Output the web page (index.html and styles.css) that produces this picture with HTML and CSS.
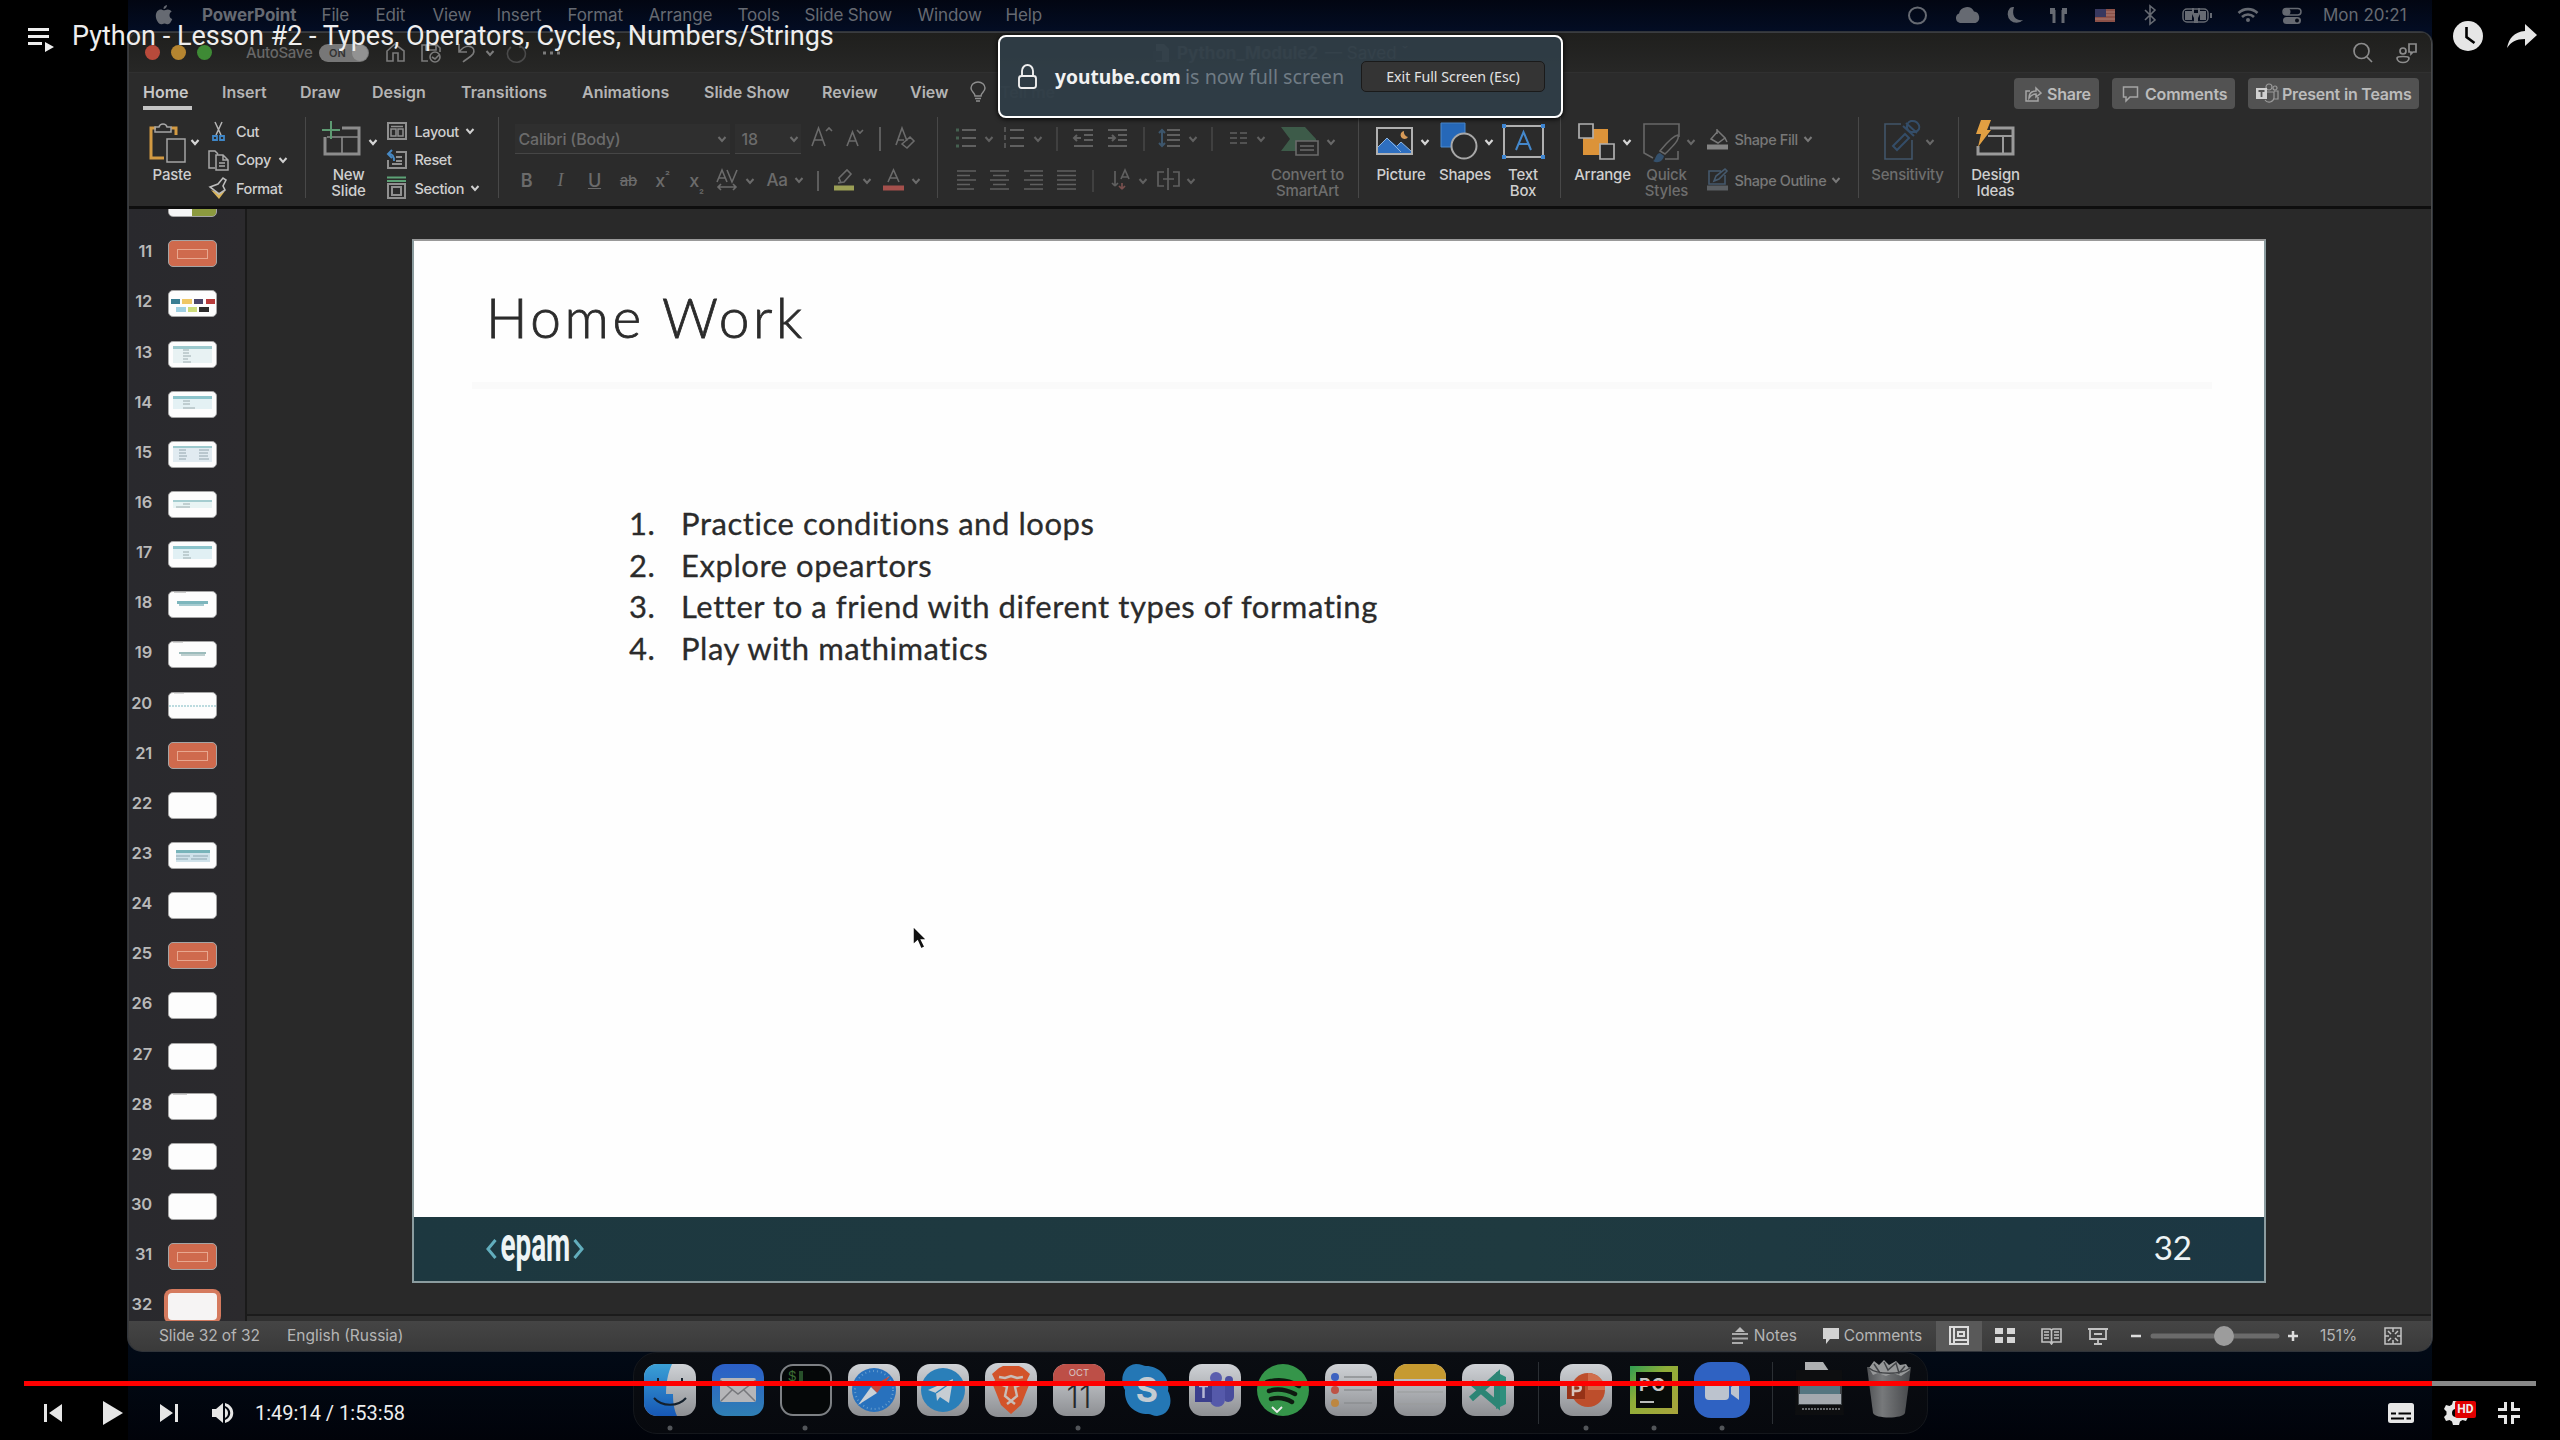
FILE: index.html
```html
<!DOCTYPE html>
<html lang="en">
<head>
<meta charset="utf-8">
<title>Python - Lesson #2</title>
<link rel="stylesheet" href="styles.css">
</head>
<body>
<svg class="defs" aria-hidden="true">
  <symbol id="caret" viewBox="0 0 10 8"><path d="M1.5 2 5 6 8.5 2" fill="none" stroke="currentColor" stroke-width="2"/></symbol>
</svg>
<main class="stage">
<section class="video">

  <header class="menubar">
    <nav class="menus">
      <svg class="apple" width="18" height="22" viewBox="0 0 18 22"><path fill="currentColor" d="M12 1c.1 2-1.500 4-3.500 4C8.300 3 10 1.200 12 1zM9 6.300c1 0 2-.9 3.800-.9 1.500 0 3 .8 3.900 2-3.300 2-2.700 6.400.6 7.600-.8 2.200-2.600 5.200-4.400 5.200-1.300 0-1.800-.8-3.400-.8s-2.100.8-3.400.8C3.500 20.200.6 15.500.8 11.500 1 7.700 3.300 5.500 5.700 5.500c1.400 0 2.400.8 3.300.8z"/></svg>
      <b class="m-app">PowerPoint</b><span class="m-file">File</span><span class="m-edit">Edit</span><span class="m-view">View</span><span class="m-insert">Insert</span><span class="m-format">Format</span><span class="m-arrange">Arrange</span><span class="m-tools">Tools</span><span class="m-show">Slide Show</span><span class="m-window">Window</span><span>Help</span>
    </nav>
    <div class="tray">
      <svg width="420" height="32" viewBox="1900 0 420 32" fill="none" stroke="currentColor" stroke-width="2">
        <ellipse cx="1917.500" cy="15.500" rx="8.500" ry="8"/>
        <path fill="currentColor" stroke="none" d="M1960 23a5 5 0 0 1-1-9.500 8 8 0 0 1 15-2 6 6 0 0 1 1.500 11.500z"/>
        <path fill="currentColor" stroke="none" d="M2010 8a8.500 8.500 0 1 0 13 12c-7 1-12-4-9-13-1.500 0-3 .4-4 1z"/>
        <path stroke-width="3" d="M2054 23V10m9 13V10"/><path stroke-width="5" d="M2052.500 8v6m12-6v6"/>
        <path fill="#8c5148" stroke="none" d="M2095 9h20v13h-20z"/><path stroke="#a97c72" stroke-width="1" d="M2106 12h9m-9 3h9m-20 4h20"/><path fill="#38385f" stroke="none" d="M2095 9h11v8h-11z"/>
        <path stroke-width="1.600" d="m2145 10 10 10-5 4V6l5 4-10 10"/>
        <rect x="2183" y="9" width="25" height="13" rx="4" stroke-width="1.500"/><path fill="currentColor" stroke="none" d="M2185 11h7v9h-7zm15 0h6v9h-6zm10 2h2v5h-2zM2192 8h2v5h4V8h2v6l-2 4v5h-4v-5l-2-4z"/>
        <path stroke-width="2.600" d="M2238.500 13a13.500 13.500 0 0 1 19 0m-15.500 4a8.500 8.500 0 0 1 12 0"/><circle cx="2248" cy="20" r="2" fill="currentColor" stroke="none"/>
        <rect x="2283" y="8.500" width="18" height="6.500" rx="3.200" stroke-width="1.500"/><circle cx="2287" cy="11.700" r="2.500" fill="currentColor"/><rect x="2283" y="17" width="18" height="7" rx="3.500" fill="currentColor" stroke="none"/><circle cx="2297" cy="20.500" r="2" fill="#050a16" stroke="none"/>
      </svg>
      <span class="clock">Mon 20:21</span>
    </div>
  </header>

  <section class="window">
    <div class="titlebar">
      <i class="light close"></i><i class="light minimise"></i><i class="light expand"></i>
      <span class="autosave">AutoSave</span><span class="switch">ON<i></i></span>
      <svg class="quick" width="190" height="38" viewBox="380 34 190 38" fill="none" stroke="#7b7b7b" stroke-width="1.600">
        <path d="M387 61V51l8-7 9 7v10h-6v-8h-5v8z"/>
        <path d="M428 61h-6V45h15l3 3v4M426 45v5h10v-5"/><circle cx="435" cy="57" r="5"/><path d="m432 57 3 2 4-4"/>
        <path d="M459 44v8h8M459 52c8-10 18-5 14 2-2 3-7 5-10 8"/>
        <path d="m486.500 51 3.500 4 3.500-4" stroke-width="2"/>
        <path stroke="#4a4a4a" d="M520 46a9 8.500 0 1 1-9 1m9-4v5"/>
        <path stroke-width="3" d="M543 53h3m4 0h3m4 0h3"/>
      </svg>
      <span class="doc">
        <svg width="17" height="20" viewBox="0 0 17 20"><path fill="currentColor" d="M3 1h8l5 5v13H3z"/><path d="M0 8h9v9H0z" fill="#303030"/></svg>
        <b>Python_Module2</b><span>— Saved ˇ</span>
      </span>
      <svg class="tools" width="80" height="38" viewBox="2345 34 80 38" fill="none" stroke="#8c8c8c" stroke-width="1.700"><circle cx="2361.500" cy="51" r="7.500"/><path d="m2367 57 5 5M2409 44h7v8h-3l-2 2v-2h-2zM2397 58c0-2 12-2 12 0 0 6-12 6-12 0z"/><circle cx="2403" cy="51" r="3"/></svg>
    </div>

    <div class="tabs">
      <nav>
        <b class="t-home">Home</b><b class="t-insert">Insert</b><b class="t-draw">Draw</b><b class="t-design">Design</b><b class="t-trans">Transitions</b><b class="t-anim">Animations</b><b class="t-show">Slide Show</b><b class="t-review">Review</b><b class="t-view">View</b>
        <svg width="16" height="22" viewBox="0 0 16 22" fill="none" stroke="#8e8e8e" stroke-width="1.500"><path d="M5 15c0-3-4-4-4-8a7 6 0 0 1 14 0c0 4-4 5-4 8zm0 2.500h6M6 20h4"/></svg>
        <b class="tell">Tell me</b>
      </nav>
      <div class="actions">
        <button class="a-share"><svg width="18" height="18" viewBox="0 0 18 18" fill="none" stroke="#a5a5a5" stroke-width="1.500"><path d="M6 6H2v10h12v-4M5 13c0-5 3-7 7-7V3l5 5-5 4V9c-3 0-5 1-7 4z"/></svg>Share</button>
        <button class="a-comments"><svg width="18" height="18" viewBox="0 0 18 18" fill="none" stroke="#a5a5a5" stroke-width="1.500"><path d="M1.500 2h14v10H8l-4 4v-4H1.500z"/></svg>Comments</button>
        <button class="a-teams"><svg width="24" height="22" viewBox="0 0 24 22"><g fill="none" stroke="#9a9a9a" stroke-width="1.200"><circle cx="13" cy="4" r="3"/><circle cx="19" cy="5" r="2"/><path d="M8 9h10v6a5 5 0 0 1-9 2M18 8h4v8h-4"/></g><path fill="#d0d0d0" d="M0 5h11v11H0z"/><path stroke="#555" stroke-width="1.800" d="M2.500 8h6M5.500 8v6"/></svg>Present in Teams</button>
      </div>
    </div>

    <div class="ribbon">
      <div class="group g-clip">
        <div class="big w60">
          <svg width="60" height="50" viewBox="142 117 60 50" fill="none"><path stroke="#d39a42" stroke-width="3" d="M156 128h-5v30h13M171 128h5v7"/><path stroke="#a5a5a5" stroke-width="1.500" d="M155 132v-5h4c1-4 7-4 8 0h4v5zM167 139h18v23h-18z"/><path stroke="#d5d5d5" stroke-width="2.200" d="m191.500 140 3.500 4 3.500-4"/></svg>
          <span>Paste</span>
        </div>
        <div class="list">
          <div><svg width="26" height="26" viewBox="0 0 26 26" fill="none"><path stroke="#b5b5b5" stroke-width="1.500" d="m9 4 6 13M16 4l-6 13"/><path stroke="#3f87c8" stroke-width="1.800" d="M7 18h4v4H7zM14 18h4v4h-4z"/></svg>Cut</div>
          <div><svg width="26" height="26" viewBox="0 0 26 26" fill="none" stroke="#a8a8a8" stroke-width="1.500"><path d="M9 21H3V4h6l3 3M10 8h7l5 5v10H10zM17 8v5h5M13 16h6m-6 3h6"/></svg>Copy<svg class="caret"><use href="#caret"/></svg></div>
          <div><svg width="26" height="26" viewBox="0 0 26 26"><path fill="#d8b45c" d="m5 15 8 3 6-2-6 8z"/><path fill="none" stroke="#bcbcbc" stroke-width="1.600" d="m4 12 8-3 5-6 3 2-3 6 2 4-6 4z"/></svg>Format</div>
        </div>
      </div>

      <div class="group g-slides">
        <div class="big w60">
          <svg width="60" height="50" viewBox="318 117 60 50" fill="none"><path stroke="#8c8c8c" stroke-width="3" d="M341 128h17v26h-34v-17"/><path stroke="#8c8c8c" stroke-width="1.600" d="M340 137h17M341 137v16M326 137h14"/><path stroke="#5d9b72" stroke-width="2" d="M330 121v18M321 130h18"/><path stroke="#d5d5d5" stroke-width="2.200" d="m368.500 140 3.500 4 3.500-4"/></svg>
          <span>New<br>Slide</span>
        </div>
        <div class="list">
          <div><svg width="26" height="26" viewBox="0 0 26 26" fill="none" stroke="#909090"><path stroke-width="2" d="M4 5h18v16H4z"/><path stroke-width="1.500" d="M7 8.500h12M7 11h5v7H7zM14 11h5v7h-5z"/></svg>Layout<svg class="caret"><use href="#caret"/></svg></div>
          <div><svg width="26" height="26" viewBox="0 0 26 26" fill="none"><path stroke="#909090" stroke-width="2" d="M12 5h10v16H4V13M12 10h6m-6 4h6m-10 3h10"/><path stroke="#4789c4" stroke-width="2" d="M10 14c0-5-1-7-5-7m3-4L4 7l4 4"/></svg>Reset</div>
          <div><svg width="26" height="26" viewBox="0 0 26 26" fill="none"><path stroke="#5da276" stroke-width="2" d="M3 2.500h19M3 6h19"/><path stroke="#909090" stroke-width="2" d="M4 9h17v14H4zM8 12h9v8H8z"/></svg>Section<svg class="caret"><use href="#caret"/></svg></div>
        </div>
      </div>

      <div class="group g-font">
        <div class="row fontrow">
          <div class="field f-name">Calibri (Body)<svg class="caret"><use href="#caret"/></svg></div>
          <div class="field f-size">18<svg class="caret"><use href="#caret"/></svg></div>
          <svg width="130" height="30" viewBox="805 124 130 30" fill="none" stroke="#6b6b6b" stroke-width="1.600"><path d="m813 146 6.500-18 6.500 18M815.500 140h8M827 131l3-3 3 3M848 146l5.500-14 5.500 14M850 141h7M858 130l3 3 3-3M881 127v24M897 145l6-17 5 13M899 140h6M903 144l8-7 4 4-7 7z"/></svg>
        </div>
        <div class="row">
          <span class="gl bold">B</span><span class="gl ital">I</span><span class="gl under">U</span><span class="gl strike">ab</span><span class="gl">x<sup>²</sup></span><span class="gl">x<sub>₂</sub></span>
          <svg width="46" height="30" viewBox="713 165 46 30" fill="none" stroke="#6b6b6b" stroke-width="1.600"><path d="m716 182 5-12 5 12m-8-4h6M726 170l5 12 5-12M717 187h18m-15-3-3 3 3 3m12-6 3 3-3 3"/><path stroke-width="2" d="m745.500 179 3.500 4 3.500-4"/></svg>
          <span class="gl aa">Aa<svg class="caret"><use href="#caret"/></svg></span>
          <svg width="118" height="30" viewBox="808 165 118 30" fill="none" stroke="#6b6b6b" stroke-width="1.600"><path d="M817 171v20M840 183l-2-5 8-8 4 4-7 8-6 1"/><path stroke="#9b9f55" stroke-width="5" d="M833 188h20"/><path stroke-width="2" d="m862.500 179 3.500 4 3.500-4M911.500 179l3.500 4 3.500-4"/><path d="m887 182 5.500-12 5.500 12m-9-4h7"/><path stroke="#a5504c" stroke-width="5" d="M882 188h21"/></svg>
        </div>
      </div>

      <div class="group g-para">
        <div class="pararows">
          <svg width="322" height="30" viewBox="948 124 322 30" fill="none" stroke="#606060" stroke-width="2"><path d="M961 130h14m-14 8h14m-14 8h14M1009 130h14m-14 8h14m-14 8h14"/><path stroke="#456050" stroke-width="3" d="M955 130h3m-3 8h3m-3 8h3"/><path d="M1004 127v5m0 3v5m0 3v5" stroke-width="1.500"/><path d="m984.500 137 3.500 4 3.500-4M1033.500 137l3.500 4 3.500-4M1188.500 137l3.500 4 3.500-4M1256.500 137l3.500 4 3.500-4"/><path stroke="#484848" stroke-width="1.500" d="M1056 127v24M1143 127v24M1211 127v24"/><path d="M1073 130h19m-9 5h9m-9 5h9m-19 6h19M1107 130h19m-9 5h9m-9 5h9m-19 6h19M1080 138h-7m3-3-3 3 3 3M1107 138h7m-3-3 3 3-3 3M1166 130h13m-13 5h13m-13 5h13m-13 6h13"/><path stroke="#3d566c" d="M1161 130v16m-3-13 3-3 3 3m-6 10 3 3 3-3"/><path stroke-width="1.500" d="M1229 133h7m-7 5h7m-7 5h7m3-10h7m-7 5h7m-7 5h7"/></svg>
          <svg width="322" height="30" viewBox="948 165 322 30" fill="none" stroke="#606060" stroke-width="1.700"><path d="M956 171h19m-19 4.500h13m-13 4.500h19m-19 4.500h13m-13 4.500h17M989 171h19m-16 4.500h13m-16 4.500h19m-16 4.500h13m-16 4.500h19M1023 171h19m-13 4.500h13m-19 4.500h19m-13 4.500h13m-19 4.500h19M1056 171h19m-19 4.500h19m-19 4.500h19m-19 4.500h19m-19 4.500h19"/><path stroke="#484848" stroke-width="1.500" d="M1092 170v22"/><path d="M1114 171v15m0 0-3-3m3 3 3-3M1120 179l4-9 4 9m-7-2h6"/><path stroke="#78504e" d="M1121 189v-6m0 6-3-3m3 3 3-3"/><path d="M1163 172h-6v14h6m9-14h6v14h-6m-5-18v22m-5-11h11"/><path stroke-width="2" d="m1138.500 179 3.500 4 3.500-4M1186.500 179l3.500 4 3.500-4"/></svg>
        </div>
        <div class="big dim w74">
          <svg width="74" height="50" viewBox="1270 117 74 50" fill="none"><path fill="#3d5b49" d="M1280 127h24l11 12v5h-18v7h-17l9-12z"/><path fill="#2b2b2b" stroke="#6b6b6b" stroke-width="1.600" d="M1295 141h22v14h-22zM1299 146h14m-14 4h14"/><path stroke="#686868" stroke-width="2" d="m1326.500 140 3.500 4 3.500-4"/></svg>
          <span>Convert to<br>SmartArt</span>
        </div>
      </div>

      <div class="group g-insert">
        <div class="big w63">
          <svg width="63" height="50" viewBox="1370 117 63 50" fill="none"><path fill="#2a2a2a" stroke="#b0b0b0" stroke-width="2" d="M1377 128h35v26h-35z"/><path fill="#2e6fc0" d="m1378 147 9-9 10 8 4-4 10 9v2h-33z"/><path stroke="#8eb4dd" stroke-width="1" d="m1378 147 9-9 14 14m-4-6 4-4 10 9"/><path fill="#d79a58" d="M1404 131a4 4 0 1 0 4 6 5 5 0 0 1-4-6z"/><path stroke="#d5d5d5" stroke-width="2.200" d="m1421.500 140 3.500 4 3.500-4"/></svg>
          <span>Picture</span>
        </div>
        <div class="big w63">
          <svg width="63" height="50" viewBox="1434 117 63 50" fill="none"><path fill="#2668b8" stroke="#4a8ad0" d="M1441 123h24v24h-24z"/><circle cx="1464" cy="146" r="12.500" fill="#2a2a2a" stroke="#a8a8a8" stroke-width="2"/><path stroke="#d5d5d5" stroke-width="2.200" d="m1485.500 140 3.500 4 3.500-4"/></svg>
          <span>Shapes</span>
        </div>
        <div class="big w53">
          <svg width="53" height="50" viewBox="1497 117 53 50" fill="none"><path stroke="#b0b0b0" stroke-width="2" d="M1504 126h39v31h-39z"/><path fill="#3e86d2" d="M1502 124h4v4h-4zM1541 124h4v4h-4zM1502 155h4v4h-4zM1541 155h4v4h-4z"/><path stroke="#4488cc" stroke-width="2" d="m1516 150 7.500-18 7.500 18m-12-6h9"/></svg>
          <span>Text<br>Box</span>
        </div>
      </div>

      <div class="group g-draw">
        <div class="big w62">
          <svg width="62" height="50" viewBox="1572 117 62 50"><path fill="#dc9339" d="M1583 129h25v26h-25z"/><path fill="#2a2a2a" stroke="#b0b0b0" stroke-width="1.700" d="M1579 124h14v14h-14zM1600 144h14v15h-14z"/><path fill="none" stroke="#d5d5d5" stroke-width="2.200" d="m1623.500 140 3.500 4 3.500-4"/></svg>
          <span>Arrange</span>
        </div>
        <div class="big dim w60 quickstyles">
          <svg width="60" height="50" viewBox="1637 117 60 50" fill="none"><path stroke="#686868" stroke-width="1.600" d="M1653 158l-9-5v-29h35v13M1665 159h13v-8"/><path stroke="#686868" stroke-width="1.500" d="M1660 151c5-6 12-15 18-16 2 5-6 12-13 19z"/><path fill="#34506c" d="M1653 161c3-1 2-7 7-8l4 3c-1 5-6 8-11 5z"/><path stroke="#686868" stroke-width="2" d="m1687.500 140 3.500 4 3.500-4"/></svg>
          <span>Quick<br>Styles</span>
        </div>
        <div class="list two">
          <div><svg width="26" height="26" viewBox="0 0 26 26" fill="none"><path stroke="#777" stroke-width="1.500" d="m6 13 7-8 7 7-7 5zM12 8V3m8 9 2 4"/><path stroke="#848484" stroke-width="5" d="M2 21h21"/></svg>Shape Fill<svg class="caret"><use href="#caret"/></svg></div>
          <div><svg width="26" height="26" viewBox="0 0 26 26" fill="none"><path stroke="#45596d" stroke-width="1.600" d="M16 4H4v13h16V8M9 14l2-5 9-7 2 2-8 8z"/><path stroke="#5b5f63" stroke-width="5" d="M2 21h21"/></svg>Shape Outline<svg class="caret"><use href="#caret"/></svg></div>
        </div>
      </div>

      <div class="group g-sens">
        <div class="big dim w80">
          <svg width="80" height="50" viewBox="1868 117 80 50" fill="none"><path stroke="#41556a" stroke-width="1.600" d="M1901 124h-16v35h27v-19"/><path stroke="#344d68" stroke-width="2" d="m1893 146 12-12 4 4-12 12zM1903 126l11 10m-8-13 11 10m-6-12c-6 2-6 12 4 11 8-2 4-12-4-11z"/><path stroke="#686868" stroke-width="2" d="m1926.500 140 3.500 4 3.500-4"/></svg>
          <span>Sensitivity</span>
        </div>
      </div>
      <div class="group g-ideas">
        <div class="big w64">
          <svg width="64" height="50" viewBox="1964 117 64 50" fill="none"><path stroke="#9a9a9a" stroke-width="3" d="M1990 128h23v26h-35v-8"/><path stroke="#9a9a9a" stroke-width="2" d="M1988 136h25m-10 0v17"/><path fill="#e2a042" d="M1981 120h10l-4 10h4l-13 17 3-13h-5z"/></svg>
          <span>Design<br>Ideas</span>
        </div>
      </div>
    </div>

    <div class="work">
      <aside class="slides">
        <ol>
          <li><span></span><i class="th split"></i></li>
          <li><span>11</span><i class="th orange"></i></li>
          <li><span>12</span><i class="th"><svg viewBox="0 0 49 27"><path fill="#3a7e93" d="M3 9h9v5H3z"/><path fill="#efc766" d="M14 9h10v5H14z"/><path fill="#4a4668" d="M26 9h9v5h-9z"/><path fill="#b93c3c" d="M38 9h9v5h-9z"/><path fill="#9fd0e3" d="M8 17h10v5H8z"/><path fill="#cddc7a" d="M20 17h9v5h-9z"/><path fill="#2c2c2c" d="M31 17h10v5H31z"/></svg></i></li>
          <li><span>13</span><i class="th"><svg viewBox="0 0 49 27"><path fill="#e8f2f3" d="M5 5h39v17H5z"/><path fill="#9cc9cd" d="M5 5h39v3H5z"/><path stroke="#889a9c" d="M15 9h6m-6 3h6m-6 3h8m-8 3h5m-5 3h8" stroke-width=".8"/></svg></i></li>
          <li><span>14</span><i class="th"><svg viewBox="0 0 49 27"><path fill="#e4f1f4" d="M5 5h39v13H5z"/><path fill="#8cc4cb" d="M5 5h39v3H5z"/><path stroke="#889a9c" d="M15 10h7m-7 3h7m-7 4h12" stroke-width=".8"/></svg></i></li>
          <li><span>15</span><i class="th"><svg viewBox="0 0 49 27"><path fill="#e1ebf1" d="M5 5h39v16H5z"/><path fill="#9cc9cd" d="M5 5h39v2H5z"/><path stroke="#7f929c" d="M11 9h7m-7 3h7m-7 3h8m-8 3h7m13-9h10m-10 3h9m-9 3h9m-9 3h10" stroke-width=".8"/></svg></i></li>
          <li><span>16</span><i class="th"><svg viewBox="0 0 49 27"><path fill="#e8f4f4" d="M5 9h39v8H5z"/><path fill="#a5cdd0" d="M5 9h39v2H5z"/><path stroke="#889a9c" d="M15 13h7m-14 3h14" stroke-width=".8"/></svg></i></li>
          <li><span>17</span><i class="th"><svg viewBox="0 0 49 27"><path fill="#e1f0f4" d="M5 5h39v13H5z"/><path fill="#8cc4cb" d="M5 5h39v3H5z"/><path stroke="#889a9c" d="M15 11h6m-6 3h6m-6 3h8" stroke-width=".8"/></svg></i></li>
          <li><span>18</span><i class="th"><svg viewBox="0 0 49 27"><path fill="#7db6bd" d="M9 10h31v3H9z"/><path fill="#a6cbd0" d="M11 13h25v2H11z"/><path stroke="#999" d="M6 1h12"/></svg></i></li>
          <li><span>19</span><i class="th"><svg viewBox="0 0 49 27"><path fill="#9dbcbc" d="M11 11h27v2H11z"/><path fill="#bfd0d0" d="M13 13h24v2H13z"/><path stroke="#aaa" d="M5 1h10"/></svg></i></li>
          <li><span>20</span><i class="th"><svg viewBox="0 0 49 27"><path stroke="#a6d0d5" stroke-width="1.500" stroke-dasharray="2 1" d="M1 14h47"/><path stroke="#bbb" d="M6 1h10"/></svg></i></li>
          <li><span>21</span><i class="th orange"></i></li>
          <li><span>22</span><i class="th"></i></li>
          <li><span>23</span><i class="th"><svg viewBox="0 0 49 27"><path fill="#cfe2ea" d="M8 8h34v12H8z"/><path fill="#78b4ba" d="M8 8h34v3H8z"/><path stroke="#8ca5b0" d="M8 14h14m3 0h15M8 17h12m3 0h16"/></svg></i></li>
          <li><span>24</span><i class="th"></i></li>
          <li><span>25</span><i class="th orange"></i></li>
          <li><span>26</span><i class="th"></i></li>
          <li><span>27</span><i class="th"></i></li>
          <li><span>28</span><i class="th"><svg viewBox="0 0 49 27"><path stroke="#999" d="M5 1h14"/></svg></i></li>
          <li><span>29</span><i class="th"></i></li>
          <li><span>30</span><i class="th"></i></li>
          <li><span>31</span><i class="th orange"></i></li>
          <li><span>32</span><i class="th current"></i></li>
        </ol>
      </aside>
      <div class="canvas">
        <article class="slide">
          <h1>Home Work</h1>
          <hr>
          <ol>
            <li>Practice conditions and loops</li>
            <li>Explore opeartors</li>
            <li>Letter to a friend with diferent types of formating</li>
            <li>Play with mathimatics</li>
          </ol>
          <footer>
            <div class="logo"><svg width="11" height="20" viewBox="0 0 11 20"><path d="M9.500 1 2 10l7.500 9" fill="none" stroke="#62aebd" stroke-width="3"/></svg><span class="word"><b>epam</b></span><svg width="11" height="20" viewBox="0 0 11 20"><path d="M1.500 1 9 10l-7.500 9" fill="none" stroke="#62aebd" stroke-width="3"/></svg></div>
            <span class="num">32</span>
          </footer>
        </article>
      </div>
    </div>

    <div class="status">
      <span class="s-slide">Slide 32 of 32</span><span>English (Russia)</span>
      <div class="s-right">
        <svg width="18" height="18" viewBox="0 0 18 18"><path d="M1 7h16M1 11.500h16M1 16h11" stroke="#aaa" stroke-width="1.800"/><path fill="#bbb" d="m4 5 5-5 5 5z"/></svg><span class="s-notes">Notes</span>
        <svg width="18" height="18" viewBox="0 0 18 18"><path fill="#d2d2d2" d="M1 1h16v11H8l-4 5v-5H1z"/></svg><span class="s-comm">Comments</span>
        <span class="s-view on"><svg width="20" height="19" viewBox="0 0 20 19" fill="none" stroke="#dcdcdc" stroke-width="2"><path d="M1 1h18v17H1zM5 1v17M9 6h6v4H9zM5 14h14"/></svg></span>
        <span class="s-view"><svg width="20" height="17" viewBox="0 0 20 17"><path fill="#d5d5d5" d="M0 1h8v6H0zM12 1h8v6h-8zM0 10h8v6H0zM12 10h8v6h-8z"/></svg></span>
        <span class="s-view"><svg width="21" height="18" viewBox="0 0 21 18" fill="none" stroke="#c2c2c2" stroke-width="1.600"><path d="M1 2h8l1.500 1L12 2h8v13h-8l-1.500 2L9 15H1zM10.500 3v13M3 5h5m-5 3h5m-5 3h5m5-6h5m-5 3h5m-5 3h5"/></svg></span>
        <span class="s-view"><svg width="20" height="18" viewBox="0 0 20 18" fill="none" stroke="#c2c2c2" stroke-width="1.800"><path d="M0 2h20M2 2v10h16V2M6 7h8M10 12v5m-4 0h8"/></svg></span>
        <svg class="zoomctl" width="176" height="24" viewBox="2127 1323 176 24"><path stroke="#ddd" stroke-width="2.500" d="M2131 1335h10M2288 1335h10M2293 1330v10"/><path stroke="#6b6b6b" stroke-width="5" stroke-linecap="round" d="M2153 1335h124"/><circle cx="2224" cy="1335" r="10" fill="#9c9c9c"/></svg>
        <span class="s-pct">151%</span>
        <svg width="18" height="18" viewBox="0 0 18 18" fill="none" stroke="#c5c5c5" stroke-width="1.500"><path d="M1 1h16v16H1zM1 9h4m8 0h4M9 1v4m0 8v4M4 4l3 3m7-3-3 3M4 14l3-3m7 3-3-3"/></svg>
      </div>
    </div>
  </section>

  <div class="dock">
    <svg width="52" height="56" viewBox="0 0 52 56"><defs><linearGradient id="gb" x2="0" y2="1"><stop offset="0" stop-color="#3aa0d6"/><stop offset="1" stop-color="#1657b5"/></linearGradient><linearGradient id="gw" x2="0" y2="1"><stop offset="0" stop-color="#cfd2d6"/><stop offset="1" stop-color="#8d8f93"/></linearGradient></defs><rect y="2" width="52" height="52" rx="13" fill="url(#gw)"/><path fill="url(#gb)" d="M13 2h15c-4 9-6 18-6 30h7c0 9 1 15 4 22H13A13 13 0 0 1 0 41V15A13 13 0 0 1 13 2z"/><path d="M14 16v6m24-6v6M10 36c8 9 24 9 32 0" stroke="#14202c" stroke-width="2" fill="none"/></svg>
    <svg width="52" height="56" viewBox="0 0 52 56"><defs><linearGradient id="gm" x2="0" y2="1"><stop offset="0" stop-color="#2b5fc8"/><stop offset="1" stop-color="#2f7fb4"/></linearGradient></defs><rect y="2" width="52" height="52" rx="13" fill="url(#gm)"/><rect x="8" y="16" width="36" height="24" rx="2" fill="#b5b5b8"/><path d="m8 18 18 14 18-14M9 39l12-12m22 12L31 27" stroke="#77787c" stroke-width="1.500" fill="none"/></svg>
    <svg width="52" height="56" viewBox="0 0 52 56"><rect x="1" y="3" width="50" height="50" rx="12" fill="#050708" stroke="#7d8084" stroke-width="2"/><text x="8" y="19" font-size="14" font-family="Liberation Mono" fill="#3c6e34">$</text><path fill="#28502a" d="M19 9h4v11h-4z"/></svg>
    <svg width="52" height="56" viewBox="0 0 52 56"><rect y="2" width="52" height="52" rx="13" fill="url(#gw)"/><circle cx="26" cy="28" r="22" fill="#2871bd"/><circle cx="26" cy="28" r="19" fill="none" stroke="#659ccd" stroke-width="2" stroke-dasharray="1 3"/><path fill="#bd4a40" d="m42 14-19 11 6 6z"/><path fill="#cbd1d7" d="m10 43 13-18 6 6z"/></svg>
    <svg width="52" height="56" viewBox="0 0 52 56"><rect y="2" width="52" height="52" rx="13" fill="url(#gw)"/><circle cx="26" cy="28" r="22" fill="#2a7fb9"/><path fill="#c6cdd3" d="m11 28 25-11-4 24-9-6-3 4-1-8z"/><path stroke="#2a7fb9" stroke-width="1.500" d="m19 31 13-9"/></svg>
    <svg width="52" height="56" viewBox="0 0 52 56"><rect y="1" width="52" height="54" rx="13" fill="url(#gw)"/><path fill="#d2532a" d="m14 6 4-2h16l4 2 7 6-3 6 2 5-8 20-10 9-10-9L8 23l2-5-3-6z"/><path fill="none" stroke="#c9bdb7" stroke-width="2.400" d="m14 15 6 1 6-2 6 2 6-1M15 22l7 3-2 9 6 5 6-5-2-9 7-3M22 42l4-3 4 3"/></svg>
    <svg width="52" height="56" viewBox="0 0 52 56"><rect y="2" width="52" height="52" rx="13" fill="url(#gw)"/><path fill="#bd4f47" d="M0 19v-4A13 13 0 0 1 13 2h26a13 13 0 0 1 13 13v4z"/><text x="26" y="14" text-anchor="middle" font-size="9.500" font-family="Inter" fill="#d9c9c7">OCT</text><text x="26" y="46" text-anchor="middle" font-size="31" font-weight="300" font-family="Inter" fill="#26282b" textLength="25">11</text></svg>
    <svg width="52" height="56" viewBox="0 0 52 56"><path fill="#2477b5" d="M15 2c5 0 8 2 10 2 14 0 24 12 22 25 5 9 3 24-11 25-4 0-6-2-9-2C13 52 3 42 4 28-2 18 2 3 15 2z"/><text x="26" y="40" text-anchor="middle" font-size="34" font-weight="700" font-family="Inter" fill="#c3cbd2">S</text></svg>
    <svg width="52" height="56" viewBox="0 0 52 56"><rect y="2" width="52" height="52" rx="13" fill="url(#gw)"/><circle cx="27" cy="16" r="6" fill="#5b5fae"/><circle cx="40" cy="18" r="4" fill="#4c50a0"/><path fill="#5559aa" d="M21 23h15v14c0 10-13 10-15 2z"/><path fill="#484c9c" d="M36 24h9v10c0 6-6 7-9 5z"/><path fill="#3b3f8d" d="M6 19h17v21H6z"/><path stroke="#b5b7d4" stroke-width="2.500" d="M10 24h9m-4.500 0v12"/></svg>
    <svg width="52" height="56" viewBox="0 0 52 56"><circle cx="26" cy="28" r="26" fill="#35954a"/><path fill="none" stroke="#0d1a10" stroke-width="4.500" stroke-linecap="round" d="M10 20c10-3 22-2 32 4M12 29c9-3 18-1 26 3M14 37c8-2 14-1 21 3"/></svg>
    <svg width="52" height="56" viewBox="0 0 52 56"><rect y="2" width="52" height="52" rx="13" fill="url(#gw)"/><path stroke="#8c8e91" stroke-width="1.500" d="M19 15h28M19 28h28M19 41h28"/><circle cx="10" cy="15" r="4" fill="#3d62c0"/><circle cx="10" cy="28" r="4" fill="#bd5346"/><circle cx="10" cy="41" r="4" fill="#bd8741"/></svg>
    <svg width="52" height="56" viewBox="0 0 52 56"><rect y="2" width="52" height="52" rx="13" fill="url(#gw)"/><path fill="#c69a30" d="M0 17v-2A13 13 0 0 1 13 2h26a13 13 0 0 1 13 13v2z"/><path stroke="#999b9b" d="M3 30h46M3 42h46"/></svg>
    <svg width="52" height="56" viewBox="0 0 52 56"><rect y="2" width="52" height="52" rx="13" fill="url(#gw)"/><path fill="#2f8f7d" d="m34 10 10 5v27l-10 5z"/><path fill="none" stroke="#2c8575" stroke-width="6" d="m9 37 26-23v28L9 20"/></svg>
    <i class="rule r1"></i>
    <svg width="52" height="56" viewBox="0 0 52 56"><rect y="2" width="52" height="52" rx="13" fill="url(#gw)"/><circle cx="28" cy="28" r="17" fill="#bd4e2c"/><path fill="#d06e4d" d="M28 11a17 17 0 0 1 17 17H28z"/><path fill="#963217" d="M7 19h18v18H7z"/><path fill="none" stroke="#d7c3bb" stroke-width="2.500" d="M13 34V23h4c5 0 5 6 0 6h-4"/></svg>
    <svg class="py" width="50" height="56" viewBox="0 0 50 56"><defs><linearGradient id="gp" x2="1" y2="1"><stop offset="0" stop-color="#2f9d52"/><stop offset=".4" stop-color="#8fae38"/><stop offset="1" stop-color="#a9a43c"/></linearGradient></defs><path fill="url(#gp)" d="M1 4h48v48H1z"/><path fill="#080b08" d="M7 10h36v36H7z"/><text x="10" y="29" font-size="18" font-weight="700" font-family="Inter" fill="#c4c6c4" textLength="26">PG</text><path stroke="#b9bbb9" stroke-width="2" d="M11 40h14"/></svg>
    <svg width="56" height="56" viewBox="0 0 56 56"><rect width="56" height="56" rx="17" fill="#2f62c2"/><rect x="11" y="19" width="24" height="19" rx="4" fill="#bcc3ce"/><path fill="#bcc3ce" d="m37 25 8-6v19l-8-6z"/></svg>
    <i class="rule r2"></i>
    <svg width="52" height="56" viewBox="0 0 52 56"><path fill="#aeb0b2" d="M11 0h18l6 9H11z"/><path fill="#0d0e10" d="M2 8h46l2 45H1z"/><path fill="#3d4246" d="M4 19h44v24H4z"/><path fill="#557681" d="M6 20h40v12H6z"/><path fill="#a4a9af" d="M5 32h42v10H5z"/><path stroke="#676a6d" stroke-width="2" stroke-dasharray="2 1" d="M8 47h38"/></svg>
    <svg class="trash" width="46" height="58" viewBox="0 0 46 58"><defs><linearGradient id="gt"><stop offset="0" stop-color="#505255"/><stop offset=".35" stop-color="#77797b"/><stop offset="1" stop-color="#45474a"/></linearGradient></defs><path fill="url(#gt)" d="M1 7h44l-6 46c-2 6-30 6-32 0z"/><path fill="#969899" d="m3 8 5-7 5 4 5-5 5 5 7-4 4 4 6-1 4 6-9 6-8-3-7 3-8-3-5 2z"/><path stroke="#424447" stroke-width="1.500" fill="none" d="m8 4 6 9m4-11 4 8 8-7 3 10 6-7M3 8c8 7 32 7 41 0"/></svg>
  </div>
  <svg class="running" width="1295" height="8" viewBox="633 1424 1295 8" fill="#525559"><circle cx="670" cy="1428" r="2.500"/><circle cx="805" cy="1428" r="2.500"/><circle cx="1078" cy="1428" r="2.500"/><circle cx="1586" cy="1428" r="2.500"/><circle cx="1654" cy="1428" r="2.500"/><circle cx="1722" cy="1428" r="2.500"/></svg>
</section>

<svg class="pointer" width="18" height="28" viewBox="0 0 18 28"><path d="M2 2v19l4.500-4 3.500 8 4-2-3.500-7H16z" fill="#111" stroke="#fff" stroke-width="1.500"/></svg>

<section class="player">
  <header class="ptop">
    <svg width="26" height="26" viewBox="0 0 26 26" fill="#eee"><path d="M0 1h21v3H0zM0 8h21v3H0zM0 15h14v3H0zM17 15l9 5-9 5z"/></svg>
    <h2>Python - Lesson #2 - Types, Operators, Cycles, Numbers/Strings</h2>
    <svg class="later" width="30" height="30" viewBox="0 0 30 30"><circle cx="15" cy="15" r="15" fill="#e6e6e6"/><path d="M13.500 6v10l8 6" fill="none" stroke="#000" stroke-width="2.600"/></svg>
    <svg width="31" height="26" viewBox="0 0 31 26"><path fill="#e6e6e6" d="m18 1 12 11-12 11v-7C9 16 4 19 0 25 2 15 7 9 18 8z"/></svg>
  </header>
  <div class="pbottom">
    <div class="progress"><i></i></div>
    <div class="controls">
      <svg width="18" height="18" viewBox="0 0 18 18" fill="#e6e6e6"><path d="M0 0h3v18H0zM18 0v18L5 9z"/></svg>
      <svg class="play" width="20" height="24" viewBox="0 0 20 24" fill="#e6e6e6"><path d="m0 0 20 12L0 24z"/></svg>
      <svg class="next" width="18" height="18" viewBox="0 0 18 18" fill="#e6e6e6"><path d="M15 0h3v18h-3zM0 0l13 9-13 9z"/></svg>
      <svg class="vol" width="22" height="22" viewBox="0 0 22 22" fill="#e6e6e6"><path d="M0 7h4l7-6v20l-7-6H0zM13 6c4 2 4 8 0 10zM13 1c11 3 11 17 0 20v-3c7-3 7-11 0-14z"/></svg>
      <span class="time">1:49:14 / 1:53:58</span>
      <svg class="chev" width="14" height="10" viewBox="0 0 14 10"><path d="m2 2 5 5 5-5" fill="none" stroke="#eee" stroke-width="1.800"/></svg>
      <div class="pright">
        <svg width="26" height="20" viewBox="0 0 26 20"><rect width="26" height="20" rx="2.500" fill="#e6e6e6"/><path d="M3 10.500h5m2.500 0H23M3 15.500h13m2.500 0H23" stroke="#000" stroke-width="2"/></svg>
        <span class="gear"><svg width="24" height="24" viewBox="0 0 24 24"><path fill="#e6e6e6" fill-rule="evenodd" d="m9 0-1 3.500-2.500 1.400L2 4l-2 4 2.500 2.500v3L0 16l2 4 3.500-1L8 20.500 9 24h6l1-3.500 2.500-1.500 3.500 1 2-4-2.500-2.500v-3L24 8l-2-4-3.500.9L16 3.500 15 0zm3 8a4 4 0 1 1 0 8 4 4 0 0 1 0-8z"/></svg><b>HD</b></span>
        <svg width="22" height="22" viewBox="0 0 22 22"><path d="M0 7.500h7.500V0M14.500 0v7.500H22M0 14.500h7.500V22M14.500 22v-7.500H22" fill="none" stroke="#e6e6e6" stroke-width="3"/></svg>
      </div>
    </div>
  </div>
</section>

<div class="notice">
  <svg width="19" height="25" viewBox="0 0 19 25" fill="none" stroke="#eee" stroke-width="1.900"><rect x="1" y="12" width="17" height="12" rx="2.500"/><path d="M4 12V7a5.500 6 0 0 1 11 0v5"/></svg>
  <b>youtube.com</b><span>is now full screen</span>
  <button>Exit Full Screen (Esc)</button>
</div>
</main>
</body>
</html>
```
FILE: styles.css
```css
* { box-sizing: border-box; }
html, body { margin: 0; background: #000; }
body { width: 2560px; height: 1440px; overflow: hidden; font-family: Inter, "Liberation Sans", sans-serif; }
button { font: inherit; border: 0; padding: 0; color: inherit; }
svg { flex: none; display: block; }
.defs { position: absolute; width: 0; height: 0; }
.caret { width: 10px; height: 8px; }
.stage { position: relative; width: 2560px; height: 1440px; overflow: hidden; }
.video { width: 2304px; height: 1440px; margin: 0 128px; background: linear-gradient(#020814 0, #030c20 32px, #020a16 1350px, #01030a 100%); white-space: nowrap; }

/* macOS menu bar */
.menubar { height: 32px; display: flex; justify-content: space-between; align-items: center; color: #666a72; font-size: 17px; background: linear-gradient(#020612, #030d24); }
.menus { display: flex; align-items: center; margin: -2px 0 0 27px; }
.apple { width: 47px; padding-right: 29px; }
.menus > span { letter-spacing: -.15px; }
.m-app { width: 119.500px; font-weight: 700; letter-spacing: -.1px; }
.m-file { width: 54px; } .m-edit { width: 57px; } .m-view { width: 64px; } .m-insert { width: 71px; }
.m-format { width: 81px; } .m-arrange { width: 89px; } .m-tools { width: 67px; } .m-show { width: 113px; } .m-window { width: 88px; }
.tray { display: flex; align-items: center; }
.clock { width: 112px; padding: 0 0 2px 3px; }

/* PowerPoint window */
.window { height: 1319px; display: flex; flex-direction: column; background: #2b2b2b; border-radius: 12px 12px 14px 14px; overflow: hidden; box-shadow: 0 0 0 1px #30343a; border-left: 1px solid #3c3c3c; border-right: 1px solid #4a4a4a; }
.titlebar { height: 41px; display: flex; align-items: center; padding-left: 16px; background: linear-gradient(#1f1f1d, #272726); border-top: 1px solid #3a3c40; border-bottom: 1px solid #303030; }
.light { width: 15px; height: 15px; border-radius: 50%; margin-right: 11px; }
.close { background: #b84a3b; } .minimise { background: #b58530; } .expand { background: #3e8a35; }
.autosave { width: 73px; margin-left: 23px; color: #686868; font-size: 15px; font-weight: 500; letter-spacing: -.3px; }
.switch { display: flex; align-items: center; justify-content: space-between; width: 50px; height: 18px; padding: 0 1px 0 10px; border-radius: 9px; background: #777; color: #333; font-size: 11px; font-weight: 600; }
.switch i { width: 16px; height: 16px; border-radius: 50%; background: #929292; }
.quick { margin-left: 11px; }
.doc { display: flex; gap: 7px; align-items: center; margin-left: 583px; color: #858585; font-size: 17px; width: 240px; }
.tools { margin-left: auto; margin-right: 6px; }

.tabs { height: 39px; display: flex; justify-content: space-between; color: #b4b4b4; font-size: 16px; }
.tabs nav { display: flex; align-items: flex-start; padding: 8px 0 0 14px; }
.tabs nav b { font-weight: 600; line-height: 22px; letter-spacing: 0; }
.t-home { width: 49px; height: 29px; border-bottom: 4px solid #c4c4c4; margin-right: 30px; color: #c8c8c8; }
.t-insert { width: 78px; } .t-draw { width: 72px; } .t-design { width: 89px; } .t-trans { width: 121px; } .t-anim { width: 122px; } .t-show { width: 118px; } .t-review { width: 88px; } .t-view { width: 60px; }
.tell { margin-left: 14px; color: #666; }
.actions { display: flex; padding: 5px 12px 0 0; gap: 13px; }
.actions button { height: 31px; border-radius: 4px; background: #525252; color: #bcbcbc; display: flex; align-items: center; font-weight: 600; font-size: 16px; letter-spacing: -.2px; }
.a-share { width: 85px; padding-left: 10px; gap: 5px; }
.a-comments { width: 123px; padding-left: 10px; gap: 5px; }
.a-teams { width: 171px; padding-left: 8px; gap: 2px; }

.ribbon { height: 97px; display: flex; padding-top: 5px; border-bottom: 3px solid #0e0e0e; color: #cfcfcf; font-size: 15px; font-weight: 500; letter-spacing: -.2px; }
.group { height: 81px; display: flex; border-right: 1.500px solid #484848; }
.big { display: flex; flex-direction: column; align-items: center; text-align: center; line-height: 16px; }
.big > span { margin: 0 -10px; }
.dim { color: #6e6e6e; }
.w53 { width: 53px; } .w60 { width: 60px; } .w62 { width: 62px; } .w63 { width: 63px; } .w64 { width: 64px; } .w74 { width: 74px; } .w80 { width: 80px; }
.list > div { display: flex; align-items: center; gap: 4px; height: 28.600px; font-size: 14.500px; letter-spacing: -.4px; }
.list .caret { margin-left: 3px; }
.g-clip { width: 176.500px; padding-left: 13px; gap: 4px; }
.g-slides { width: 193px; padding-left: 13px; gap: 5px; }
.g-slides .list > div { gap: 5px; }
.g-slides .list .caret { margin-left: 1px; }
.g-font { width: 439px; padding: 7px 0 0 11px; flex-direction: column; gap: 11px; color: #6b6b6b; }
.row { display: flex; height: 30px; align-items: center; }
.field { display: flex; align-items: center; justify-content: space-between; height: 30px; font-size: 16px; border-bottom: 1px solid #464646; background: #2f2f2f; }
.f-name { width: 215px; margin-left: 5px; padding: 0 3px 0 4px; }
.f-size { width: 66px; margin: 0 3px 0 5px; padding: 0 2px 0 7px; }
.gl { width: 34px; text-align: center; font-size: 18px; }
.bold { font-weight: 600; } .ital { font-style: italic; font-family: "Liberation Serif", serif; } .under { text-decoration: underline; } .strike { text-decoration: line-through; font-size: 15px; }
.gl sup, .gl sub { font-size: 11px; line-height: 0; }
.aa { width: 49px; display: flex; align-items: center; justify-content: space-between; padding: 0 5px 0 7px; font-size: 17px; }
.g-para { width: 421px; padding-left: 11px; }
.pararows { display: flex; flex-direction: column; gap: 11px; padding-top: 7px; }
.g-insert { width: 202px; padding-left: 11px; gap: 1px; }
.g-insert .w53 { margin-left: -1px; }
.g-draw { width: 298px; padding-left: 11px; }
.quickstyles { margin-left: 3px; }
.two { margin-left: 8px; color: #787878; padding-top: 1.500px; }
.two > div { height: 41px; }
.two .caret { margin-left: 1px; }
.g-sens { width: 100px; padding-left: 9px; }
.g-ideas { padding-left: 5px; border: 0; }

/* Slide navigator and canvas */
.work { display: flex; height: 1112px; }
.slides { width: 118px; overflow: hidden; background: linear-gradient(90deg, #29292d, #2b2a2d); border-right: 2px solid #1a1a1a; }
.slides ol { list-style: none; margin: -30.400px 0 0; padding: 0; }
.slides li { height: 50.150px; display: flex; align-items: center; gap: 13px; color: #b9b9b9; font-size: 16.500px; font-weight: 600; }
.slides li > span { width: 26px; padding: 0 1px 5px 0; text-align: right; letter-spacing: -.2px; }
.slides li > span { width: 24px; margin-right: 2px; }
.th { width: 49px; height: 27px; border-radius: 5px; background: #fdfdfd; overflow: hidden; border: 1px solid #a5a5a5; }
.th svg { margin: -1px; width: 49px; height: 27px; }
.orange { background: #cf6a4d; padding: 8px; }
.orange::before { content: ""; display: block; height: 8px; border: 1px solid #e8a78f; }
.split { background: linear-gradient(90deg, #f5f5f5 50%, #8c9a3f 50%); }
.current { background: #f6f4f4; border: 0; box-shadow: 0 0 0 4px #d57a5e; border-radius: 4px; }
.canvas { flex: 1; padding: 30px 0 0 165px; background: #292929; border-bottom: 5px solid #303030; box-shadow: inset 0 -2px #1b1b1b; }
.slide { width: 1854px; height: 1044px; display: flex; flex-direction: column; background: #fefefe; color: #2b2b2b; font-family: Lato, "Open Sans", sans-serif; border: 2px solid #8b9c9f; border-top-color: #999; }
.slide h1 { margin: 40px 0 0 72px; font-size: 55px; line-height: 72px; font-weight: 300; letter-spacing: 3.600px; -webkit-text-stroke: .8px #2b2b2b; }
.slide hr { border: 0; width: 1740px; height: 7px; margin: 29px 0 0 58px; background: #fafafa; }
.slide ol { margin: 114px 0 0 215px; padding: 0; counter-reset: n; font-size: 31px; line-height: 41.700px; letter-spacing: .56px; -webkit-text-stroke: .3px #2b2b2b; }
.slide li { display: flex; counter-increment: n; }
.slide li::before { content: counter(n) "."; width: 52px; }
.slide footer { margin-top: auto; height: 64px; display: flex; align-items: center; justify-content: space-between; padding: 0 72px; background: linear-gradient(90deg, #1d3840, #1f3a40 60%, #1c3743); color: #eef4f5; }
.logo { display: flex; align-items: center; gap: 2px; }
.word { width: 72px; height: 63px; display: flex; align-items: center; justify-content: center; font: 49px/50px Roboto, sans-serif; }
.word b { font-weight: 700; transform: translateY(-4px) scaleX(.57); }
.num { font-size: 33px; padding: 0 0 4px 0; }

/* Status bar */
.status { height: 30px; display: flex; align-items: center; padding: 0 29px 1px 30px; background: linear-gradient(#454545, #3a3a3a); color: #b5b5b5; font-size: 15.500px; }
.s-slide { width: 128px; letter-spacing: -.1px; }
.s-right { margin-left: auto; display: flex; align-items: center; height: 30px; }
.s-notes { width: 73px; padding-left: 5px; }
.s-comm { width: 96px; padding-left: 4px; letter-spacing: -.1px; }
.s-view { width: 46.300px; height: 30px; display: flex; align-items: center; justify-content: center; }
.zoomctl { margin-left: 6px; }
.on { background: #595959; }
.s-pct { width: 81px; padding-left: 17px; }

/* Dock */
.dock { width: 1295px; height: 82px; margin: 1px 0 0 505px; padding: 8.500px 15px 0 10px; display: flex; gap: 16.150px; background: linear-gradient(#0a0d12, #07090e); border: 1px solid #14171c; border-radius: 24px; }
.rule { width: 1px; height: 62px; background: #2b2f34; }
.r1 { margin: 0 6px 0 8px; } .r2 { margin: 0 6px 0 5px; }
.py { margin: 0 -1px 0 1px; }
.trash { margin: -2px 0 0 4px; }
.running { margin: -10px 0 0 505px; }

.pointer { position: absolute; left: 911px; top: 924px; }

/* Video player chrome, laid over the picture */
.player { position: absolute; inset: 0; display: flex; flex-direction: column; justify-content: space-between; font-family: Roboto, sans-serif; color: #eee; }
.ptop { display: flex; align-items: center; height: 72px; padding: 0 22px 0 28px; }
.ptop > svg:first-child { margin-top: 7px; }
.ptop h2 { margin: 0 auto 0 18px; font-size: 27px; font-weight: 400; line-height: 36px; }
.later { margin-right: 24px; }
.progress { height: 5px; margin: 0 24px; background: #888; }
.progress i { display: block; width: 2408px; height: 5px; background: #f00; }
.controls { height: 54px; display: flex; align-items: center; padding: 0 40px 0 44px; }
.play { margin-left: 41px; } .next { margin-left: 37px; } .vol { margin-left: 34px; }
.time { margin-left: 21px; width: 201px; font-size: 20px; }
.chev { margin-left: 814px; margin-top: -6px; }
.pright { margin-left: auto; display: flex; align-items: center; gap: 30px; }
.gear { position: relative; width: 24px; }
.gear b { position: absolute; left: 11px; top: 0; width: 21px; height: 17px; background: #e00000; border-radius: 2px; font-size: 12px; line-height: 17px; text-align: center; }

/* Browser full-screen notice */
.notice { position: absolute; left: 998px; top: 35px; width: 565px; height: 83px; display: flex; align-items: center; padding: 0 16px 0 18px; background: rgba(47, 61, 71, .95); border: 2px solid #fff; border-radius: 8px; color: #f2f2f2; font: 19.700px "Noto Sans", sans-serif; white-space: nowrap; box-shadow: 0 1px 5px #000; }
.notice b { width: 130px; margin-left: 18px; font-size: 19.200px; }
.notice span { color: #6f7b84; }
.notice button { margin: -1px 0 0 auto; width: 184px; height: 31px; background: #343434; border: 1px solid #1a1a1a; border-radius: 5px; font-size: 14.200px; color: #e2e2e2; }
```
